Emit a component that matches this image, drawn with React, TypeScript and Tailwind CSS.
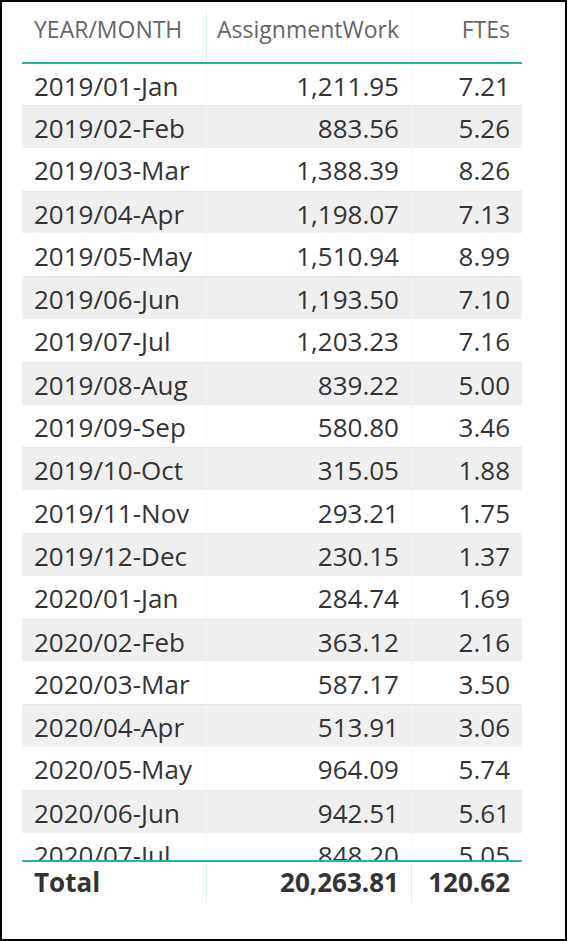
const rows: [string, string, string][] = [
  ['2019/01-Jan', '1,211.95', '7.21'],
  ['2019/02-Feb', '883.56', '5.26'],
  ['2019/03-Mar', '1,388.39', '8.26'],
  ['2019/04-Apr', '1,198.07', '7.13'],
  ['2019/05-May', '1,510.94', '8.99'],
  ['2019/06-Jun', '1,193.50', '7.10'],
  ['2019/07-Jul', '1,203.23', '7.16'],
  ['2019/08-Aug', '839.22', '5.00'],
  ['2019/09-Sep', '580.80', '3.46'],
  ['2019/10-Oct', '315.05', '1.88'],
  ['2019/11-Nov', '293.21', '1.75'],
  ['2019/12-Dec', '230.15', '1.37'],
  ['2020/01-Jan', '284.74', '1.69'],
  ['2020/02-Feb', '363.12', '2.16'],
  ['2020/03-Mar', '587.17', '3.50'],
  ['2020/04-Apr', '513.91', '3.06'],
  ['2020/05-May', '964.09', '5.74'],
  ['2020/06-Jun', '942.51', '5.61'],
  ['2020/07-Jul', '848.20', '5.05'],
  ['2020/08-Aug', '790.10', '4.70'],
];

export default function App() {
  return (
    <div
      className="w-[567px] h-[941px] border-2 border-black bg-white pl-5 pt-2"
      style={{ fontFamily: '"Open Sans", "Noto Sans", sans-serif' }}
    >
      <div className="w-[500px]">
        {/* header */}
        <div className="grid grid-cols-[185px_205px_110px] h-[54px] border-b-2 border-[#1fb6aa] text-[23px] text-[#666666]">
          <div className="pl-3 pt-[4px] leading-[30px] border-r border-[#dcf3f1]">YEAR/MONTH</div>
          <div className="pr-3 pt-[4px] leading-[30px] text-right border-r border-[#f0f9f8]">AssignmentWork</div>
          <div className="pr-3 pt-[4px] leading-[30px] text-right">FTEs</div>
        </div>

        {/* body */}
        <div className="h-[796px] overflow-hidden text-[26px] text-[#333333]">
          {rows.map((r, i) => (
            <div
              key={r[0]}
              className={`grid grid-cols-[185px_205px_110px] items-center ${
                i === 0 ? 'h-[41px]' : 'h-[42.8px]'
              } ${i % 2 === 1 ? 'bg-[#efefef] border-t border-[#e6e6e6]' : 'bg-white'}`}
            >
              <div className="pl-3 pt-[3px] h-full flex items-center border-r border-[#f6f6f6]">{r[0]}</div>
              <div className="pr-3 pt-[3px] h-full flex items-center justify-end border-r border-[#f6f6f6]">{r[1]}</div>
              <div className="pr-3 pt-[3px] h-full flex items-center justify-end">{r[2]}</div>
            </div>
          ))}
        </div>

        {/* total */}
        <div className="grid grid-cols-[185px_205px_110px] h-[43px] border-t-2 border-[#1fb6aa] text-[26px] font-bold text-[#333333]">
          <div className="pl-3 flex items-center border-r border-[#dcf3f1]">Total</div>
          <div className="pr-3 flex items-center justify-end border-r border-[#dcf3f1]">20,263.81</div>
          <div className="pr-3 flex items-center justify-end">120.62</div>
        </div>
      </div>
    </div>
  );
}
